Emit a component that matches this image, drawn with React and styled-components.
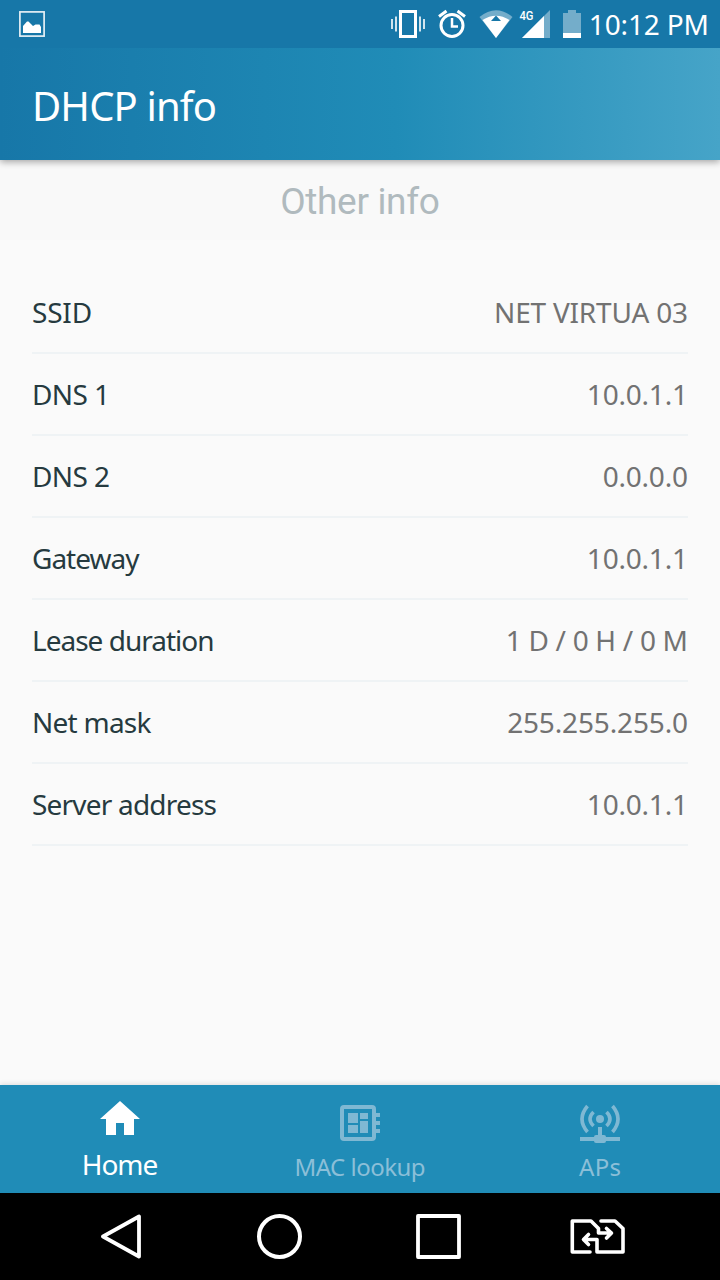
import React from 'react';
import styled, { createGlobalStyle } from 'styled-components';

const GlobalStyle = createGlobalStyle`
  * { box-sizing: border-box; }
  body { margin: 0; font-family: "Noto Sans", sans-serif; }
  svg { display: block; flex: none; }
`;

const Screen = styled.div`
  width: 720px;
  height: 1280px;
  display: flex;
  flex-direction: column;
  overflow: hidden;
  background: #fafafa;
`;

const StatusBar = styled.div`
  height: 48px;
  flex: none;
  padding: 0 11px 0 19px;
  display: flex;
  align-items: center;
  justify-content: space-between;
  z-index: 2;
  background: #1777a8;
`;

const Label = styled.span`
  display: inline-block;
  white-space: nowrap;
  font-size: ${(p) => p.$size}px;
  line-height: ${(p) => p.$line || 40}px;
  letter-spacing: ${(p) => p.$track || 0}px;
  margin-right: ${(p) => -(p.$track || 0)}px;
  color: ${(p) => p.$color || '#fff'};
`;

const StatusRight = styled.div`
  width: 319px;
  display: flex;
  align-items: center;
  justify-content: space-between;
`;

const Header = styled.header`
  height: 112px;
  flex: none;
  padding: 4px 32px 0;
  display: flex;
  align-items: center;
  z-index: 1;
  background: linear-gradient(90deg, #1777a8 0%, #208cb7 55%, #46a4c8 100%);
  box-shadow: 0 2px 7px rgba(0, 0, 0, 0.35);
`;

const Subheader = styled.div`
  height: 80px;
  flex: none;
  padding-top: 3px;
  display: flex;
  align-items: center;
  justify-content: center;
  background: #f9f9f9;
  font-family: Roboto, sans-serif;
`;

const List = styled.main`
  flex: 1;
  padding: 32px 32px 0;
`;

const Row = styled.div`
  height: 82px;
  display: flex;
  align-items: center;
  justify-content: space-between;
  border-bottom: 2px solid #eff3f5;
`;

const Tabs = styled.nav`
  height: 108px;
  flex: none;
  display: grid;
  grid-template-columns: repeat(3, 1fr);
  background: #208cb7;
  box-shadow: 0 -1px 5px rgba(0, 0, 0, 0.12);
`;

const Tab = styled.div`
  display: flex;
  flex-direction: column;
  align-items: center;
  padding-top: ${(p) => (p.$active ? 12 : 14)}px;
  gap: 7px;
  color: ${(p) => (p.$active ? '#fff' : '#7fb8d3')};
`;

const SystemBar = styled.div`
  height: 87px;
  flex: none;
  display: grid;
  grid-template-columns: 157px 159px 154px auto;
  align-items: center;
  padding: 1px 0 0 100px;
  background: #000;
`;

const rows = [
  { name: 'SSID', value: 'NET VIRTUA 03', nameTrack: -0.2, valueTrack: -0.2 },
  { name: 'DNS 1', value: '10.0.1.1', nameTrack: -0.6, valueTrack: -0.2 },
  { name: 'DNS 2', value: '0.0.0.0', nameTrack: -0.6, valueTrack: -0.2 },
  { name: 'Gateway', value: '10.0.1.1', nameTrack: -1, valueTrack: -0.2 },
  { name: 'Lease duration', value: '1 D / 0 H / 0 M', nameTrack: -1, valueTrack: -0.3 },
  { name: 'Net mask', value: '255.255.255.0', nameTrack: -0.75, valueTrack: -0.15 },
  { name: 'Server address', value: '10.0.1.1', nameTrack: -0.8, valueTrack: -0.2 },
];

const PictureIcon = () => (
  <svg width="26" height="26" viewBox="0 0 26 26">
    <rect x="0.9" y="0.9" width="24.2" height="24.2" fill="none" stroke="#e4eff5" strokeWidth="1.7" />
    <path d="M4 22V15L8 10.5h1.5L14 15l2.5-1.5h4L22 16v6z" fill="#fff" />
  </svg>
);

const StatusIcons = () => (
  <svg width="192" height="48" viewBox="390 0 192 48">
    <rect x="400.5" y="11.5" width="15" height="25" fill="none" stroke="#fff" strokeWidth="3" />
    <path d="M392 19v10M396 16.5v15M420 16.5v15M424 19v10" stroke="#fff" strokeWidth="1.6" />
    <circle cx="452" cy="25.500" r="11" fill="none" stroke="#fff" strokeWidth="3" />
    <path d="M452 18v8.5h6" fill="none" stroke="#fff" strokeWidth="2.5" />
    <path d="M439 16.5l7.5-5.500M465 16.5l-7.500-5.500" stroke="#fff" strokeWidth="3" />
    <path d="M479.500 17Q496 3.500 512.500 17L496 38z" fill="#74adca" />
    <path d="M482.500 20Q496 11.500 509.500 20L496 38z" fill="#fff" />
    <path d="M496 15.500l5 5.500h-10z" fill="#1777a8" />
    <path d="M522 38L550 10v28z" fill="#74adca" />
    <path d="M522 38L544 16v22z" fill="#fff" />
    <text x="519.5" y="20" fill="#fff" fontFamily="Roboto, sans-serif" fontWeight="500" fontSize="12" textLength="14" lengthAdjust="spacingAndGlyphs">4G</text>
    <path d="M563 13h5v-3h8v3h5v25h-18z" fill="#74adca" />
    <path d="M563 33h18v5h-18z" fill="#fff" />
  </svg>
);

const HomeIcon = () => (
  <svg width="40" height="40" viewBox="0 0 40 40">
    <path d="M20 4L0 22h6v16h10V26h8v12h10V22h6z" fill="currentColor" />
  </svg>
);

const LookupIcon = () => (
  <svg width="40" height="44" viewBox="0 0 40 44">
    <rect x="2" y="8" width="32" height="32" rx="2" fill="none" stroke="currentColor" strokeWidth="4" />
    <path d="M8 14h10v10H8zM20 14h8v6h-8zM8 26h10v8H8zM20 22h8v12h-8zM35 14h5v4h-5zM35 22h5v4h-5zM35 30h5v4h-5z" fill="currentColor" />
  </svg>
);

const AccessPointIcon = () => (
  <svg width="40" height="44" viewBox="0 0 40 44">
    <circle cx="20" cy="20" r="4" fill="currentColor" />
    <g fill="none" stroke="currentColor" strokeWidth="3.6">
      <path d="M13.500 13Q6.500 20 13.500 27M26.500 13Q33.500 20 26.500 27M7.500 7Q-3.500 20 7.500 33M32.500 7Q43.500 20 32.500 33" />
      <path d="M20 28v10M0 40h40" strokeWidth="4" />
    </g>
    <rect x="14" y="36" width="12" height="8" rx="2" fill="currentColor" />
  </svg>
);

const BackIcon = () => (
  <svg width="42" height="46" viewBox="0 0 42 46">
    <path d="M39 2.500v40L3 22.500z" fill="none" stroke="#fff" strokeWidth="3.8" strokeLinejoin="round" />
  </svg>
);

const CircleIcon = () => (
  <svg width="46" height="46" viewBox="0 0 46 46">
    <circle cx="22.500" cy="22.500" r="20.500" fill="none" stroke="#fff" strokeWidth="4" />
  </svg>
);

const SquareIcon = () => (
  <svg width="46" height="46" viewBox="0 0 46 46">
    <rect x="2" y="2" width="41" height="41" fill="none" stroke="#fff" strokeWidth="3.8" strokeLinejoin="round" />
  </svg>
);

const SimSwapIcon = () => (
  <svg width="56" height="36" viewBox="570 1219 56 36">
    <g fill="none" stroke="#fff" strokeWidth="3.6" strokeLinejoin="round" strokeLinecap="round">
      <path d="M590 1252H572.300V1221H591L598.500 1228.500V1233H611M606.500 1228.500L611.500 1233L606.500 1238" />
      <path d="M601 1221H615L623 1228.500V1252H597V1239.500H584M588.500 1234.500L583.500 1239.500L588.500 1244.500" />
    </g>
  </svg>
);

export default function App() {
  return (
    <>
      <GlobalStyle />
      <Screen>
        <StatusBar>
          <PictureIcon />
          <StatusRight>
            <StatusIcons />
            <Label $size={28} $track={-0.15}>10:12 PM</Label>
          </StatusRight>
        </StatusBar>
        <Header>
          <Label $size={40} $line={54} $track={-0.85}>DHCP info</Label>
        </Header>
        <Subheader>
          <Label $size={37} $line={44} $track={-0.35} $color="#b0babe">Other info</Label>
        </Subheader>
        <List>
          {rows.map((r) => (
            <Row key={r.name}>
              <Label $size={28} $track={r.nameTrack} $color="#263a3f">{r.name}</Label>
              <Label $size={28} $track={r.valueTrack} $color="#727272">{r.value}</Label>
            </Row>
          ))}
        </List>
        <Tabs>
          <Tab $active>
            <HomeIcon />
            <Label $size={28} $track={-1.1}>Home</Label>
          </Tab>
          <Tab>
            <LookupIcon />
            <Label $size={24} $line={34} $track={-0.5} $color="#8bbfd8">MAC lookup</Label>
          </Tab>
          <Tab>
            <AccessPointIcon />
            <Label $size={24} $line={34} $track={0.3} $color="#8bbfd8">APs</Label>
          </Tab>
        </Tabs>
        <SystemBar>
          <BackIcon />
          <CircleIcon />
          <SquareIcon />
          <SimSwapIcon />
        </SystemBar>
      </Screen>
    </>
  );
}
